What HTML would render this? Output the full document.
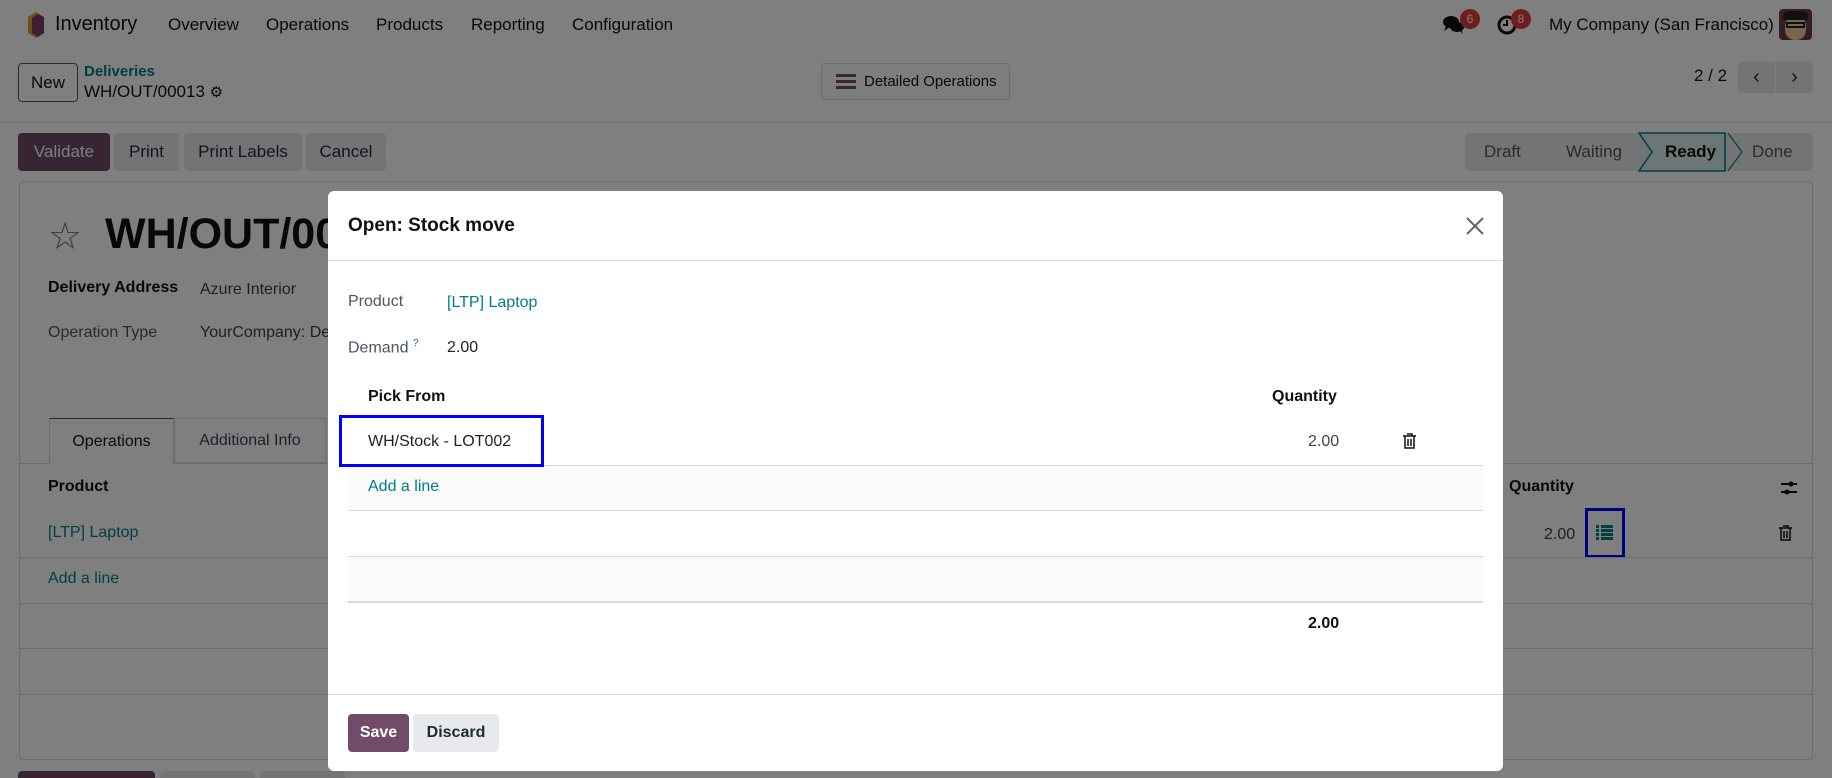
<!DOCTYPE html>
<html style="overflow:hidden;width:1832px;height:778px"><head><meta charset="utf-8"><style>
*{box-sizing:border-box;margin:0;padding:0}
body{width:1832px;height:778px;overflow:hidden;position:relative;background:#fff;font-family:"Liberation Sans",sans-serif;color:#374151;font-size:16px}
.a{position:absolute;white-space:nowrap}
.teal{color:#017e84}
.btn{position:absolute;border-radius:4px;background:#e7e9ed;color:#1f2937;font-size:16px;display:flex;align-items:center;justify-content:center;font-weight:bold}
.hl{position:absolute;height:1px;background:#d8dadd}
#ov{position:absolute;left:0;top:0;width:1832px;height:778px;background:rgba(0,0,0,0.5)}
#modal{position:absolute;left:328px;top:191px;width:1175px;height:580px;background:#fff;border-radius:6px}
</style></head><body>
<svg class="a" style="left:28px;top:12px" width="16" height="26" viewBox="0 0 16 26"><path d="M8 0 L16 5 V21 L8 26 L0 21 V5Z" fill="#e29a30"/><path d="M10 2 L16 5 V21 L10 25 L4 21 V6Z" fill="#7c3c6b"/></svg>
<div class="a" style="left:55px;top:13px;font-size:20px;color:#111">Inventory</div>
<div class="a" style="left:168px;top:15px;font-size:17px;color:#111">Overview</div>
<div class="a" style="left:266px;top:15px;font-size:17px;color:#111">Operations</div>
<div class="a" style="left:376px;top:15px;font-size:17px;color:#111">Products</div>
<div class="a" style="left:471px;top:15px;font-size:17px;color:#111">Reporting</div>
<div class="a" style="left:572px;top:15px;font-size:17px;color:#111">Configuration</div>
<svg class="a" style="left:1443px;top:15px" width="22" height="20" viewBox="0 0 22 20"><ellipse cx="8" cy="7" rx="8" ry="6" fill="#111"/><ellipse cx="14" cy="12" rx="7" ry="5" fill="#111"/><path d="M3 11 L1 16 L7 12Z M16 15 L20 19 L18 14Z" fill="#111"/></svg>
<div class="a" style="left:1460px;top:9px;width:20px;height:20px;border-radius:10px;background:#e23a3a;color:#fff;font-size:12px;text-align:center;line-height:20px">6</div>
<svg class="a" style="left:1497px;top:15px" width="20" height="20" viewBox="0 0 20 20"><circle cx="10" cy="10" r="8" fill="none" stroke="#111" stroke-width="3"/><path d="M10 5 V10 H6" stroke="#111" stroke-width="2" fill="none"/></svg>
<div class="a" style="left:1511px;top:9px;width:20px;height:20px;border-radius:10px;background:#e23a3a;color:#fff;font-size:12px;text-align:center;line-height:20px">8</div>
<div class="a" style="left:1549px;top:15px;font-size:17px;color:#111">My Company (San Francisco)</div>
<div class="a" style="left:1779px;top:9px;width:33px;height:31px;border-radius:4px;background:#6b3b4b;overflow:hidden"><div style="position:absolute;left:6px;top:7px;width:21px;height:24px;border-radius:10px;background:#f2c9a0"></div><div style="position:absolute;left:4px;top:2px;width:25px;height:9px;border-radius:6px 6px 2px 2px;background:#222"></div><div style="position:absolute;left:7px;top:13px;width:19px;height:6px;border:2px solid #222"></div></div>
<div class="a" style="left:18px;top:63px;width:60px;height:39px;border:1px solid #714b67;border-radius:4px;font-size:17px;color:#111;display:flex;align-items:center;justify-content:center">New</div>
<div class="a teal" style="left:84px;top:63px;font-size:15px;font-weight:bold">Deliveries</div>
<div class="a" style="left:84px;top:82px;font-size:17px;color:#111">WH/OUT/00013 <span style="font-size:15px">⚙</span></div>
<div class="a" style="left:821px;top:63px;width:189px;height:37px;border:1px solid #d8dadd;border-radius:4px;background:#f9fafb;font-size:15px;color:#111;display:flex;align-items:center;padding-left:14px"><span style="display:inline-block;width:20px;height:15px;border-top:3px solid #714b67;border-bottom:3px solid #714b67;position:relative;margin-right:8px"><span style="position:absolute;left:0;top:3px;width:20px;height:3px;background:#714b67"></span></span>Detailed Operations</div>
<div class="a" style="left:1694px;top:66px;font-size:17px;color:#111">2 / 2</div>
<div class="btn" style="left:1738px;top:62px;width:37px;height:31px;border-radius:4px 0 0 4px;font-weight:normal;font-size:20px">&#x2039;</div>
<div class="btn" style="left:1776px;top:62px;width:37px;height:31px;border-radius:0 4px 4px 0;font-weight:normal;font-size:20px">&#x203A;</div>
<div class="hl" style="left:0;top:122px;width:1832px"></div>
<div class="btn" style="left:18px;top:133px;width:92px;height:38px;background:#714b67;color:#fff;font-weight:normal;font-size:17px">Validate</div>
<div class="btn" style="left:114px;top:133px;width:65px;height:38px;font-weight:normal;font-size:17px">Print</div>
<div class="btn" style="left:184px;top:133px;width:118px;height:38px;font-weight:normal;font-size:17px">Print Labels</div>
<div class="btn" style="left:306px;top:133px;width:80px;height:38px;font-weight:normal;font-size:17px">Cancel</div>
<div class="a" style="left:1465px;top:133px;width:348px;height:38px;background:#e7e9ed;border-radius:4px"></div>
<div class="a" style="left:1484px;top:142px;font-size:17px;color:#555">Draft</div>
<div class="a" style="left:1566px;top:142px;font-size:17px;color:#555">Waiting</div>
<svg class="a" style="left:1638px;top:132px" width="106" height="40"><path d="M1 1 H87 V39 H1 L14 20Z" fill="#d9ecec" stroke="#017e84" stroke-width="1.5"/><path d="M90 1 L104 20 L90 39" fill="none" stroke="#017e84" stroke-width="1.2"/></svg>
<div class="a" style="left:1665px;top:142px;font-size:17px;color:#111;font-weight:bold">Ready</div>
<div class="a" style="left:1752px;top:142px;font-size:17px;color:#555">Done</div>
<div class="a" style="left:19px;top:181px;width:1794px;height:579px;border:1px solid #d8dadd;border-radius:4px"></div>
<div class="a" style="left:48px;top:214px;font-size:38px;color:#6b7280">☆</div>
<div class="a" style="left:105px;top:210px;font-size:43px;font-weight:bold;color:#111">WH/OUT/00013</div>
<div class="a" style="left:48px;top:279px;font-size:16px;font-weight:bold;color:#111">Delivery Address</div>
<div class="a" style="left:200px;top:281px;font-size:16px">Azure Interior</div>
<div class="a" style="left:48px;top:324px;font-size:16px;color:#4b5563">Operation Type</div>
<div class="a" style="left:200px;top:324px;font-size:16px">YourCompany: Delivery Orders</div>
<div class="hl" style="left:19px;top:463px;width:1794px"></div>
<div class="a" style="left:49px;top:418px;width:125px;height:46px;border:1px solid #d8dadd;border-bottom:none;border-top:1px solid #714b67;background:#fff;font-size:16px;color:#111;display:flex;align-items:center;justify-content:center">Operations</div>
<div class="a" style="left:174px;top:418px;width:152px;height:45px;border:1px solid #d8dadd;font-size:16px;display:flex;align-items:center;justify-content:center">Additional Info</div>
<div class="a" style="left:48px;top:478px;font-size:16px;font-weight:bold;color:#111">Product</div>
<div class="a" style="left:1509px;top:478px;font-size:16px;font-weight:bold;color:#111">Quantity</div>
<svg class="a" style="left:1781px;top:480px" width="16" height="16" viewBox="0 0 16 16"><path d="M0 4H16M0 12H16" stroke="#111" stroke-width="2"/><circle cx="10" cy="4" r="2.5" fill="#111"/><circle cx="6" cy="12" r="2.5" fill="#111"/></svg>
<div class="a teal" style="left:48px;top:524px;font-size:16px">[LTP] Laptop</div>
<div class="a" style="left:1544px;top:526px;font-size:16px">2.00</div>
<div class="a" style="left:1585px;top:508px;width:40px;height:50px;border:3px solid #0000ff"></div>
<svg class="a" style="left:1596px;top:525px" width="17" height="15"><g fill="#017e84"><rect x="0" y="0" width="3" height="3"/><rect x="5" y="0" width="12" height="3"/><rect x="0" y="4" width="3" height="3"/><rect x="5" y="4" width="12" height="3"/><rect x="0" y="8" width="3" height="3"/><rect x="5" y="8" width="12" height="3"/><rect x="0" y="12" width="3" height="3"/><rect x="5" y="12" width="12" height="3"/></g></svg>
<svg class="a" style="left:1779px;top:525px" width="13" height="16" viewBox="0 0 13 16"><path d="M4 1h5v2M0 3h13M2 3v12h9V3M5 6v7M8 6v7" fill="none" stroke="#111" stroke-width="1.5"/></svg>
<div class="hl" style="left:19px;top:557px;width:1794px"></div>
<div class="a teal" style="left:48px;top:570px;font-size:16px">Add a line</div>
<div class="hl" style="left:19px;top:603px;width:1794px"></div>
<div class="hl" style="left:19px;top:648px;width:1794px"></div>
<div class="hl" style="left:19px;top:694px;width:1794px"></div>
<div class="a" style="left:18px;top:771px;width:137px;height:7px;background:#714b67;border-radius:4px 4px 0 0"></div>
<div class="a" style="left:160px;top:771px;width:95px;height:7px;background:#e7e9ed;border-radius:4px 4px 0 0"></div>
<div class="a" style="left:260px;top:771px;width:85px;height:7px;background:#e7e9ed;border-radius:4px 4px 0 0"></div>
<div id="ov"></div>
<div id="modal">
<div class="a" style="left:20px;top:24px;font-size:19px;color:#111;font-weight:bold">Open: Stock move</div>
<svg class="a" style="left:1138px;top:26px" width="18" height="18"><path d="M1 1L17 17M17 1L1 17" stroke="#666" stroke-width="2"/></svg>
<div class="hl" style="left:0;top:69px;width:1175px"></div>
<div class="a" style="left:20px;top:102px;font-size:16px;color:#4b5563">Product</div>
<div class="a teal" style="left:119px;top:103px;font-size:16px">[LTP] Laptop</div>
<div class="a" style="left:20px;top:147px;font-size:16px;color:#4b5563">Demand <sup class="teal" style="font-size:10px">?</sup></div>
<div class="a" style="left:119px;top:148px;font-size:16px;color:#222">2.00</div>
<div class="a" style="left:40px;top:197px;font-size:16px;font-weight:bold;color:#111">Pick From</div>
<div class="a" style="left:944px;top:197px;font-size:16px;font-weight:bold;color:#111">Quantity</div>
<div class="a" style="left:40px;top:242px;font-size:16px;color:#222">WH/Stock - LOT002</div>
<div class="a" style="left:980px;top:242px;font-size:16px;color:#444">2.00</div>
<svg class="a" style="left:1075px;top:242px" width="13" height="16" viewBox="0 0 13 16"><path d="M4 1h5v2M0 3h13M2 3v12h9V3M5 6v7M8 6v7" fill="none" stroke="#111" stroke-width="1.5"/></svg>
<div class="hl" style="left:20px;top:274px;width:1135px"></div>
<div class="a" style="left:20px;top:275px;width:1135px;height:44px;background:#fafafa"></div>
<div class="a" style="left:11px;top:224px;width:205px;height:52px;border:3px solid #0000ff"></div>
<div class="a teal" style="left:40px;top:287px;font-size:16px">Add a line</div>
<div class="hl" style="left:20px;top:319px;width:1135px"></div>
<div class="hl" style="left:20px;top:365px;width:1135px"></div>
<div class="a" style="left:20px;top:366px;width:1135px;height:44px;background:#fafafa"></div>
<div class="a" style="left:20px;top:410px;width:1135px;height:2px;background:#d8dadd"></div>
<div class="a" style="left:980px;top:424px;font-size:16px;font-weight:bold;color:#111">2.00</div>
<div class="hl" style="left:0;top:503px;width:1175px"></div>
<div class="btn" style="left:20px;top:523px;width:61px;height:38px;background:#714b67;color:#fff">Save</div>
<div class="btn" style="left:85px;top:523px;width:86px;height:38px">Discard</div>
</div>
</body></html>
